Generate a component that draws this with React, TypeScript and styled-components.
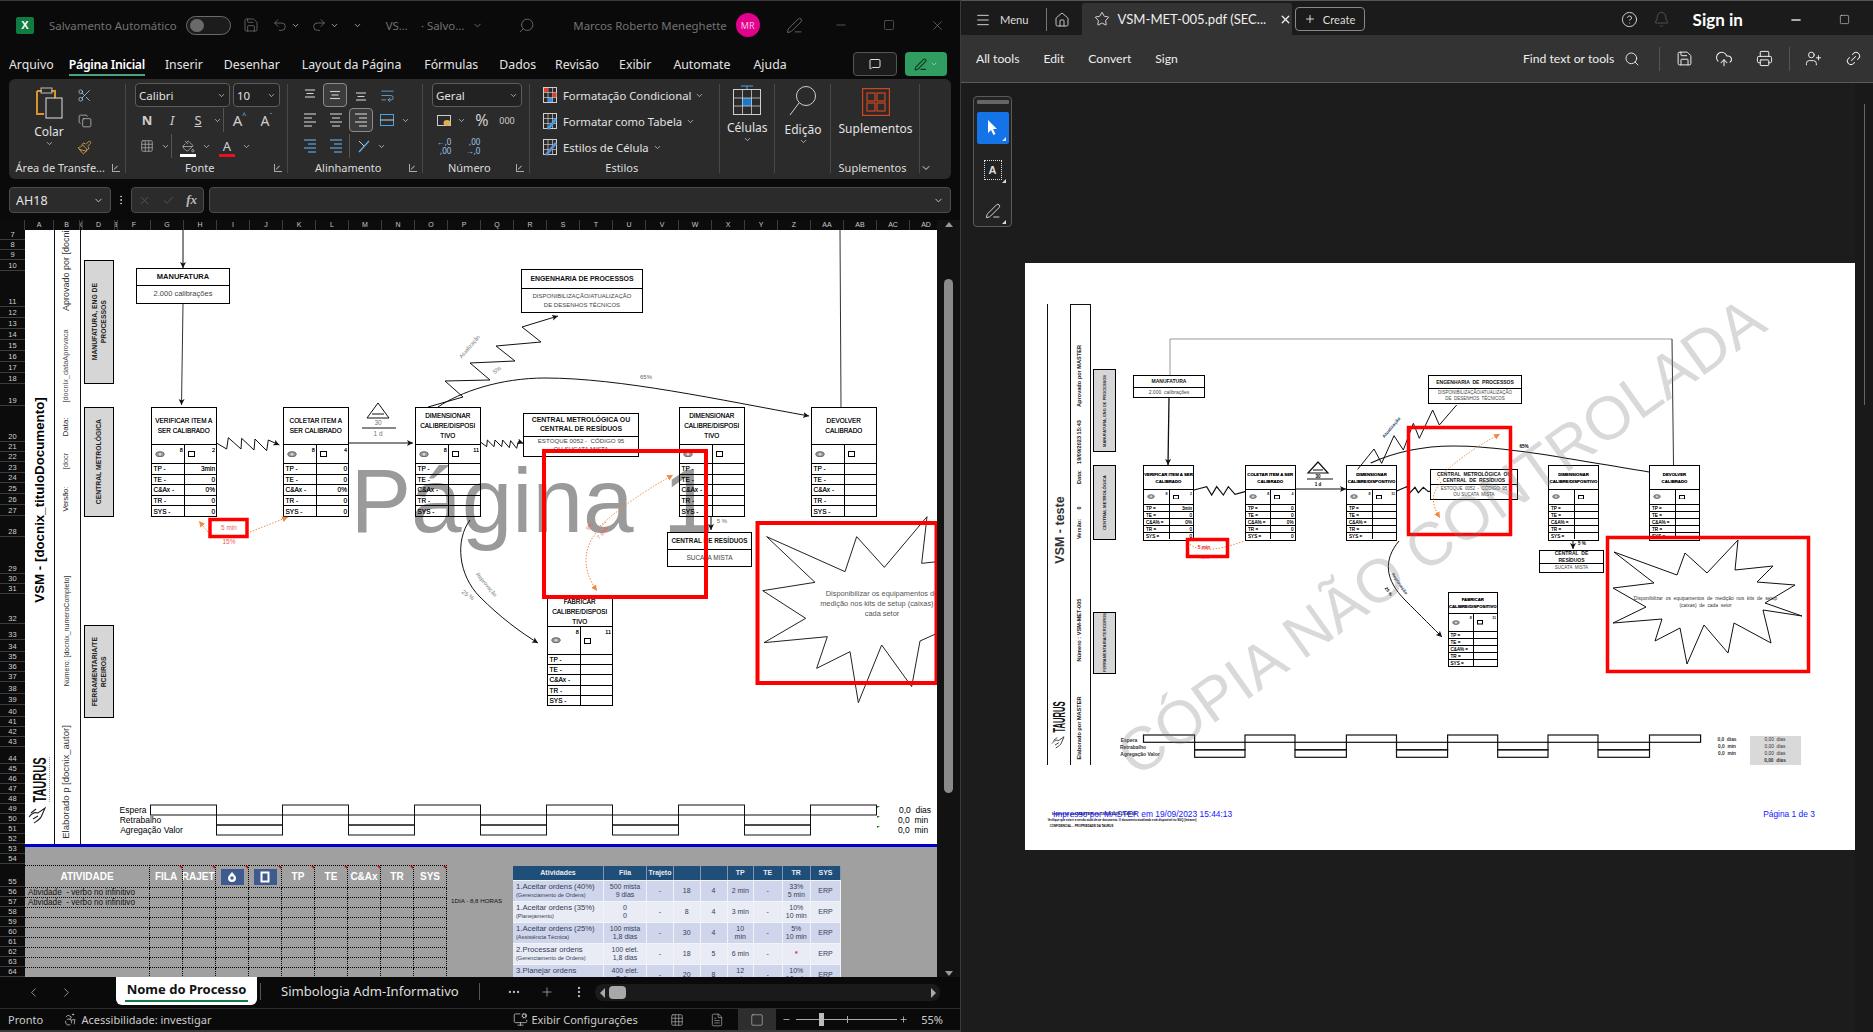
import React from 'react';
import styled, { createGlobalStyle } from 'styled-components';
import {
  ChevronDown, ChevronLeft, ChevronRight, Save, Undo2, Redo2, Search, Minus, Square, X, Plus, Scissors, Copy,
  Paintbrush, PaintBucket, Grid3x3, Check, MessageSquare, PenLine, Menu, House, Star, CircleHelp, Bell, CloudUpload,
  Printer, Link2, Ellipsis, EllipsisVertical, Accessibility, MonitorCog, FileText, UserPlus, WrapText,
} from 'lucide-react';

const UI = `"Noto Sans", "Open Sans", sans-serif`;
const SHEET = `"Liberation Sans", Arial, sans-serif`;

const Global = createGlobalStyle`
  * { box-sizing: border-box; }
  html, body { margin: 0; padding: 0; background: #111; }
  body { font-family: ${UI}; }
  svg { display: block; flex: none; }
`;

const Screen = styled.div`
  display: flex; width: 1873px; height: 1032px; overflow: hidden; background: #555;
`;

/* ------- EXCEL WINDOW ------- */
const Excel = styled.div`
  width: 961px; height: 1032px; flex: none; display: flex; flex-direction: column; background: #0a0a0a; color: #ddd;
  border-right: 1px solid #3a3a3a; border-top: 1px solid #3a3a3a;
`;
const TitleBar = styled.div`
  height: 47px; flex: none; display: flex; align-items: center; padding-left: 16px; padding-top: 1px; color: #727272;
  font-size: 11.4px; white-space: nowrap;
`;
const TB = styled.span<{ $ml?: number; $w?: number }>`
  display: flex; align-items: center; justify-content: center; flex: none;
  margin-left: ${p => p.$ml ?? 0}px; ${p => (p.$w ? `width:${p.$w}px;` : '')}
`;
const FlipIcon = styled.span`
  display: flex; transform: scaleX(-1);
`;
const XlLogo = styled.span`
  width: 18px; height: 17px; background: #107c41; border-radius: 2px; color: #fff; font: 700 11px ${SHEET};
  display: flex; align-items: center; justify-content: center; flex: none;
`;
const Toggle = styled.span`
  width: 45px; height: 19px; margin-left: 9px; border: 1px solid #6a6a6a; border-radius: 10px; padding: 2px 3px; flex: none;
  display: flex; background: #1c1c1c;
  &::before { content: ''; width: 14px; height: 13px; background: #6a6a6a; border-radius: 7px; }
`;
const Avatar = styled.span`
  width: 24px; height: 24px; margin-left: 9px; border-radius: 50%; background: #e3008c; color: #f5c6e4; flex: none;
  font-size: 9px; display: flex; align-items: center; justify-content: center;
`;
const TabsRow = styled.div`
  height: 31px; flex: none; display: flex; padding: 4px 13px 0 9px; position: relative; font-size: 12.3px; color: #e4e4e4;
`;
const RTab = styled.span<{ $ml: number; $active?: boolean }>`
  margin-left: ${p => p.$ml}px; height: 24px; line-height: 26px; white-space: nowrap; flex: none;
  font-weight: ${p => (p.$active ? 600 : 400)}; color: ${p => (p.$active ? '#fff' : '#e4e4e4')};
  letter-spacing: ${p => (p.$active ? '-0.3px' : '0')};
  border-bottom: ${p => (p.$active ? '2px solid #4ba37c' : '2px solid transparent')};
`;
const TabBtns = styled.div`
  margin-left: auto; display: flex; gap: 8px; align-self: flex-start; margin-top: 0;
`;
const CommentBtn = styled.span`
  width: 44px; height: 24px; border: 1px solid #555; border-radius: 4px; background: #1c1c1c;
  display: flex; align-items: center; justify-content: center;
`;
const ShareBtn = styled.span`
  width: 42px; height: 24px; border-radius: 4px; background: #2f9e60; color: #10331f; gap: 3px;
  display: flex; align-items: center; justify-content: center;
`;
const Ribbon = styled.div`
  height: 100px; flex: none; margin: 0 9px; background: #2b2b2b; border-radius: 6px; display: flex;
  font-size: 11.3px; color: #e2e2e2;
`;
const Group = styled.div<{ $w: number; $noSep?: boolean }>`
  width: ${p => p.$w}px; flex: none; display: flex; flex-direction: column; position: relative;
  &::after {
    content: ''; display: ${p => (p.$noSep ? 'none' : 'block')}; position: absolute; right: 0; top: 5px; bottom: 6px; width: 1px; background: #484848;
  }
`;
const Body = styled.div<{ $pl?: number }>`
  flex: 1; display: flex; padding-left: ${p => p.$pl ?? 0}px; min-height: 0;
`;
const Stack = styled.div`
  display: grid; grid-template-rows: 24px 26px 26px; padding-top: 4px; align-items: center;
`;
const Row = styled.div`
  display: flex; align-items: center; height: 100%;
`;
const Cell = styled.span<{ $w: number; $ml?: number; $sel?: boolean; $fs?: number }>`
  width: ${p => p.$w}px; height: 24px; margin-left: ${p => p.$ml ?? 0}px; flex: none; display: flex; align-items: center; justify-content: center;
  color: #cfcfcf; font-size: ${p => p.$fs ?? 13}px; position: relative;
  ${p => (p.$sel ? 'border:1px solid #8b8b8b; border-radius:4px; background:#3c3c3c;' : '')}
`;
const Sep = styled.span`
  width: 1px; height: 24px; background: #555; flex: none;
`;
const Select = styled.span<{ $w: number; $ml?: number }>`
  width: ${p => p.$w}px; height: 24px; margin-left: ${p => p.$ml ?? 0}px; flex: none; border: 1px solid #5c5c5c; border-radius: 4px;
  background: #222; padding: 0 3px; display: flex; align-items: center; justify-content: space-between; font: 11.5px ${UI}; color: #e0e0e0;
`;
const LabelRow = styled.div`
  height: 19px; flex: none; display: flex; align-items: center; padding: 0 6px 4px 0;
`;
const GLabel = styled.span`
  flex: 1; text-align: center; font-size: 11px; white-space: nowrap; color: #ddd; line-height: 14px;
`;
const Launcher = styled.span`
  width: 8px; height: 8px; border-left: 1px solid #aaa; border-bottom: 1px solid #aaa; flex: none; position: relative;
  &::after { content: ''; position: absolute; left: 1px; bottom: 1px; width: 5px; height: 1px; background: #aaa; transform: rotate(-45deg); transform-origin: left; }
`;
const PasteCol = styled.div`
  width: 55px; display: flex; flex-direction: column; align-items: center; padding-top: 8px; flex: none; font-size: 12px;
`;
const ToolsCol = styled.div`
  width: 16px; display: grid; grid-template-rows: 26px 26px 26px; padding-top: 3px; justify-items: center; align-items: center; color: #cfcfcf;
`;
const StyleRow = styled.div`
  display: flex; align-items: center; gap: 4px; height: 26px; white-space: nowrap; color: #e2e2e2;
`;
const StyleStack = styled.div`
  padding-top: 3px; padding-left: 11px;
`;
const BigCol = styled.div<{ $pt?: number }>`
  flex: 1; display: flex; flex-direction: column; align-items: center; padding-top: ${p => p.$pt ?? 6}px; font-size: 12px; color: #e2e2e2; white-space: nowrap;
`;
const BigLabel = styled.span`
  margin-top: 5px; line-height: 15px;
`;
const Tiny = styled.span<{ $c?: string }>`
  font-size: 8px; line-height: 9px; color: ${p => p.$c ?? 'inherit'}; text-align: right;
`;
const Sup = styled.span`
  font-size: 7px; line-height: 8px; align-self: flex-start; margin-top: 4px; color: #7ab8ea;
`;
const UnderBar = styled.span<{ $c: string }>`
  position: absolute; left: 5px; right: 5px; bottom: 1px; height: 3px; background: ${p => p.$c};
`;
const FormulaRow = styled.div`
  height: 26px; flex: none; margin: 8px 9px 7px; display: flex; align-items: stretch;
`;
const FBox = styled.div<{ $w?: number; $ml?: number; $grow?: boolean }>`
  ${p => (p.$w ? `width:${p.$w}px;` : '')} ${p => (p.$grow ? 'flex:1;' : 'flex:none;')}
  margin-left: ${p => p.$ml ?? 0}px; background: #2b2b2b; border: 1px solid #4c4c4c; border-radius: 4px;
  display: flex; align-items: center; justify-content: space-between; padding: 0 6px; font-size: 12.5px; color: #e6e6e6;
`;
const Fx = styled.span`
  font: italic 700 13px "Liberation Serif", serif; color: #bbb;
`;
const Dots = styled.span`
  width: 11px; margin-left: 4px; flex: none; display: flex; align-items: center; justify-content: center; color: #bbb; 
`;
const SheetWrap = styled.div`
  height: 757px; flex: none; display: flex; overflow: hidden;
`;
const SheetLeft = styled.div`
  width: 937px; flex: none; display: flex; flex-direction: column;
`;
const ColHead = styled.div`
  height: 10px; flex: none; display: flex; background: #0c0c0c; overflow: hidden;
`;
const ColH = styled.span<{ $w: number }>`
  width: ${p => p.$w}px; flex: none; border-right: 1px solid #3c3c3c; font: 400 7px/10px ${SHEET}; color: #c8c8c8; text-align: center; overflow: hidden;
`;
const SheetMid = styled.div`
  flex: 1; display: flex; min-height: 0;
`;
const RowHeads = styled.div`
  width: 25px; flex: none; background: #0c0c0c; overflow: hidden;
`;
const RowH = styled.div<{ $h: number }>`
  height: ${p => p.$h}px; border-bottom: 1px solid #3c3c3c; display: flex; align-items: flex-end; justify-content: center;
  font: 400 7.5px/9px ${SHEET}; color: #d0d0d0;
`;
const SheetMain = styled.div`
  width: 912px; flex: none; display: flex; flex-direction: column; min-height: 0;
`;
const Canvas = styled.div<{ $w: number; $h: number }>`
  position: relative; overflow: hidden; width: ${p => p.$w}px; height: ${p => p.$h}px; flex: none; background: #fff; color: #000; font-family: ${SHEET};
`;
const Overlay = styled.svg`
  position: absolute; left: 0; top: 0; width: 100%; height: 100%; pointer-events: none;
`;
const Lbl = styled.span<{ $x: number; $y: number; $r?: number; $s: number; $c?: string; $b?: boolean; $lh?: number; $ws?: number }>`
  position: absolute; left: ${p => p.$x}px; top: ${p => p.$y}px; transform: translate(-50%, -50%) rotate(${p => p.$r ?? 0}deg);
  font-size: ${p => p.$s}px; color: ${p => p.$c ?? '#000'}; font-weight: ${p => (p.$b ? 700 : 400)}; white-space: pre; text-align: center;
  line-height: ${p => (p.$lh ? `${p.$lh}px` : '1')}; word-spacing: ${p => p.$ws ?? 0}px;
`;
const Logo = styled.span<{ $x: number; $y: number; $s: number; $k: number }>`
  position: absolute; left: ${p => p.$x}px; top: ${p => p.$y}px; transform: translate(-50%, -50%) rotate(-90deg) scale(1, ${p => p.$k});
  font-size: ${p => p.$s}px; font-weight: 700; color: #111; line-height: 1; white-space: pre;
`;
const Placed = styled.div<{ $x: number; $y: number; $w: number; $h: number }>`
  position: absolute; left: ${p => p.$x}px; top: ${p => p.$y}px; width: ${p => p.$w}px; height: ${p => p.$h}px;
`;
const GreyBox = styled(Placed)<{ $fs: number }>`
  background: #d6d6d6; border: 1px solid #000; display: flex; align-items: center; justify-content: center;
  font-size: ${p => p.$fs}px; font-weight: 700; color: #222; text-align: center; white-space: nowrap;
`;
const VText = styled.span`
  writing-mode: vertical-rl; transform: rotate(180deg); line-height: 1.35; 
`;
const Node = styled(Placed)<{ $th: number }>`
  border: 1px solid #000; display: grid; grid-template-rows: ${p => p.$th}px 1fr; text-align: center;
`;
const NodeTitle = styled.div<{ $fs: number }>`
  display: flex; align-items: center; justify-content: center; font-weight: 700; font-size: ${p => p.$fs}px; line-height: 1.3; border-bottom: 1px solid #000; color: #111; white-space: pre; overflow: hidden;
`;
const NodeSub = styled.div<{ $fs: number; $top?: boolean }>`
  display: flex; align-items: ${p => (p.$top ? 'flex-start' : 'center')}; justify-content: center; font-size: ${p => p.$fs}px; line-height: 1.35; color: #444; white-space: pre; overflow: hidden;
`;
const Proc = styled(Placed)<{ $t: number; $i: number }>`
  border: 1px solid #000; display: grid; grid-template-columns: 1fr 1fr; grid-template-rows: ${p => p.$t}px ${p => p.$i}px repeat(5, 1fr);
`;
const ProcTitle = styled.div<{ $fs: number; $lh: number; $b?: boolean }>`
  grid-column: 1 / 3; display: flex; align-items: center; justify-content: center; text-align: center; font-size: ${p => p.$fs}px; line-height: ${p => p.$lh}px;
  font-weight: ${p => (p.$b ? 700 : 400)}; white-space: pre; color: #000; text-shadow: 0 0 .4px rgba(0,0,0,.7);
`;
const PCell = styled.div<{ $fs: number; $end?: boolean; $div?: boolean }>`
  border-top: 1px solid #000; ${p => (p.$div ? 'border-left: 1px solid #000;' : '')} display: flex; align-items: center; white-space: nowrap; overflow: hidden;
  justify-content: ${p => (p.$end ? 'flex-end' : 'flex-start')}; padding: 0 1px 0 2px; font-size: ${p => p.$fs}px; color: #000; text-shadow: 0 0 .4px rgba(0,0,0,.7);
`;
const IconCell = styled(PCell)`
  justify-content: space-between; padding: 0 1px 0 3px;
`;
const Num = styled.span`
  align-self: flex-start; margin-top: 2px;
`;
const BlueLine = styled.div`
  height: 3px; flex: none; background: #0000c8;
`;
const Below = styled.div`
  flex: 1; min-height: 0; overflow: hidden; background: #a0a0a0; padding-top: 18px; display: flex; align-items: flex-start;
`;
const ActTable = styled.div`
  width: 423px; flex: none; display: grid; grid-template-columns: 125px repeat(9, 33px) ; grid-template-rows: 23px repeat(9, 10px); 
`;
const AHead = styled.div<{ $mark?: boolean }>`
  border-top: 1px dotted #000; border-bottom: 1px dotted #000; border-right: 1px dotted #000; color: #fff; font: 700 10px/23px ${SHEET}; text-align: center;
  white-space: nowrap; overflow: hidden; position: relative; display: flex; align-items: center; justify-content: center;
  ${p => (p.$mark ? `&::after{content:'';position:absolute;right:0;top:0;border-top:3px solid #e00;border-left:3px solid transparent;}` : '')}
`;
const BlueIcon = styled.span`
  width: 23px; height: 16px; background: #3f5a8f; display: flex; align-items: center; justify-content: center; flex: none;
`;
const ACell = styled.div`
  border-bottom: 1px dotted #000; border-right: 1px dotted #000; font: 8.2px/9px ${SHEET}; color: #111; padding-left: 3px; white-space: pre; overflow: hidden;
`;
const Note = styled.div`
  width: 65px; flex: none; font: 6.2px/10px ${SHEET}; color: #111; padding: 31px 0 0 3px; white-space: nowrap;
`;
const DataTable = styled.div`
  width: 328px; flex: none; margin-top: 1px; display: grid; grid-template-columns: 91px 43px 27px 26.5px 27px 26.5px 28.5px 28.5px 30px; grid-auto-rows: 21px;
  grid-template-rows: 14px; font: 7px/8.5px ${SHEET}; color: #33415a;
`;
const DH = styled.div`
  background: #1f4e79; color: #e8edf5; font-weight: 700; border-right: 1px solid #7f97b5; display: flex; align-items: center; justify-content: center; text-align: center; font-size: 7px;
`;
const DC = styled.div<{ $alt?: boolean; $left?: boolean }>`
  background: ${p => (p.$alt ? '#e9ebf5' : '#cfd5ea')}; border-right: 1px solid #f2f3f9; border-top: 1px solid #f2f3f9;
  display: flex; flex-direction: column; justify-content: center; text-align: ${p => (p.$left ? 'left' : 'center')}; align-items: ${p => (p.$left ? 'flex-start' : 'center')}; padding: ${p => (p.$left ? '0 0 0 3px' : '0')};
  white-space: pre-line; font-size: ${p => (p.$left ? 7.7 : 7)}px; overflow: hidden;
`;
const Sm = styled.small`
  font-size: 5.6px; line-height: 7px; white-space: nowrap;
`;
const RedStar = styled.span`
  color: #e02020; font-weight: 700;
`;
const VScroll = styled.div`
  flex: 1; background: #121212; display: flex; flex-direction: column; align-items: center; padding-top: 2px; color: #999;
`;
const Thumb = styled.div`
  width: 9px; height: 514px; margin-top: 52px; border-radius: 5px; background: #8a8a8a;
`;
const Tri = styled.span<{ $up?: boolean }>`
  width: 0; height: 0; border-left: 4px solid transparent; border-right: 4px solid transparent; flex: none;
  ${p => (p.$up ? 'border-bottom: 5px solid #999;' : 'border-top: 5px solid #999; margin-top: auto; margin-bottom: 1px;')}
`;
const SheetTabs = styled.div`
  height: 31px; flex: none; display: flex; align-items: flex-start; color: #ddd; font-size: 13px; padding-left: 26px;
`;
const TabIcon = styled.span<{ $ml: number; $t?: number }>`
  margin-left: ${p => p.$ml}px; margin-top: ${p => p.$t ?? 8}px; display: flex; flex: none; color: #bbb;
`;
const ActiveTab = styled.span`
  margin-left: 42px; width: 141px; height: 28px; background: #fff; color: #111; border-radius: 0 0 6px 6px; font-weight: 700; text-align: center; flex: none;
  line-height: 24px; font-size: 13px; position: relative; white-space: nowrap;
  &::after { content: ''; position: absolute; left: 9px; right: 9px; bottom: 3px; height: 2px; background: #107c41; }
`;
const TabSep = styled.span<{ $ml: number }>`
  width: 1px; height: 17px; margin: 6px 0 0 ${p => p.$ml}px; background: #555; flex: none;
`;
const SheetTab = styled.span`
  margin-left: 20px; flex: none; line-height: 28px; white-space: nowrap; font-size: 13.1px;
`;
const HTrack = styled.div`
  margin: 7px 0 0 9px; width: 345px; height: 17px; border-radius: 8px; background: #1a1a1a; flex: none; display: flex; align-items: center; padding: 0 4px 0 5px;
`;
const HThumb = styled.span`
  width: 17px; height: 13px; border-radius: 4px; background: #a8a8a8; margin-left: 4px;
`;
const HTriL = styled.span`
  border-right: 5px solid #aaa; border-top: 5px solid transparent; border-bottom: 5px solid transparent;
`;
const HTriR = styled.span`
  border-left: 5px solid #aaa; border-top: 5px solid transparent; border-bottom: 5px solid transparent; margin-left: auto;
`;
const Status = styled.div`
  height: 24px; flex: none; border-top: 1px solid #2c2c2c; display: flex; align-items: center; padding-left: 8px; font-size: 11px; color: #ccc; white-space: nowrap; border-bottom: 2px solid #3a3a3a;
`;
const SItem = styled.span<{ $ml: number; $on?: boolean }>`
  margin-left: ${p => p.$ml}px; flex: none; display: flex; align-items: center; height: 100%; color: #ccc;
  ${p => (p.$on ? 'background:#2e2e2e; padding: 0 12px;' : '')}
`;
const ZoomTrack = styled.span`
  width: 101px; height: 1px; background: #aaa; margin-left: 4.5px; flex: none; position: relative; display: flex; align-items: center;
  &::before { content: ''; position: absolute; left: 23px; top: -6px; width: 5px; height: 13px; background: #bbb; }
  &::after { content: ''; position: absolute; left: 51px; top: -3px; width: 1px; height: 7px; background: #aaa; }
`;

/* ------- ACROBAT ------- */
const Acro = styled.div`
  flex: 1; height: 1032px; display: flex; flex-direction: column; background: #1c1c1c; color: #e6e6e6; font-family: "Lato", "Noto Sans", sans-serif; border-top: 1px solid #555;
`;
const ATop = styled.div`
  height: 34px; flex: none; display: flex; align-items: flex-end; background: #1b1b1b; font-size: 11.2px; white-space: nowrap;
`;
const AI = styled.span<{ $ml?: number; $w?: number }>`
  margin-left: ${p => p.$ml ?? 0}px; ${p => (p.$w ? `width:${p.$w}px;` : '')} flex: none; display: flex; align-items: center; justify-content: center; height: 31px; color: #ddd;
`;
const ASep = styled.span`
  width: 1px; height: 23px; background: #777; margin: 0 0 4px 17px; flex: none;
`;
const DocTab = styled.div`
  margin-left: 12.5px; width: 209.5px; height: 32px; background: #333; display: flex; align-items: center; border-radius: 3px 3px 0 0; padding-left: 11.5px; font-size: 13.1px; flex: none; color: #eee;
`;
const CreateBtn = styled.span`
  margin: 0 0 4px 3px; width: 70px; height: 24px; border: 1px solid #888; border-radius: 4px; display: flex; align-items: center; justify-content: center; gap: 7px; font-size: 11.2px; flex: none; color: #ddd;
`;
const SignIn = styled.span`
  font-size: 17px; font-weight: 700; color: #fff;
`;
const ATool = styled.div`
  height: 48px; flex: none; background: #333; border-bottom: 1px solid #5a5a5a; display: flex; align-items: center; font-size: 12.2px; padding-left: 15px; white-space: nowrap; color: #eee;
`;
const ATxt = styled.span<{ $ml?: number }>`
  margin-left: ${p => p.$ml ?? 0}px; flex: none; display: flex; align-items: center; color: #eee;
`;
const RotIcon = styled.span`
  display: flex; transform: rotate(-45deg);
`;
const AVSep = styled.span<{ $ml: number }>`
  width: 1px; height: 24px; background: #555; margin-left: ${p => p.$ml}px; flex: none;
`;
const AMain = styled.div`
  flex: 1; display: flex; min-height: 0;
`;
const Rail = styled.div`
  width: 64px; flex: none; padding: 13px 0 0 12px;
`;
const RailBox = styled.div`
  width: 39px; height: 131px; border: 1px solid #5a5a5a; border-radius: 4px; padding: 3px; background: #232323; display: flex; flex-direction: column; align-items: center;
`;
const RailHandle = styled.div`
  width: 32px; height: 4px; background: #666; border-radius: 1px; flex: none;
`;
const RailBtn = styled.div<{ $on?: boolean; $mt: number }>`
  width: 32px; height: 32px; margin-top: ${p => p.$mt}px; border-radius: 2px; background: ${p => (p.$on ? '#1473e6' : 'transparent')}; display: flex; align-items: center; justify-content: center; position: relative; flex: none;
  &::after { content: ''; position: absolute; right: 3px; bottom: 3px; border-bottom: 4px solid #ddd; border-left: 4px solid transparent; }
`;
const TextTool = styled.span`
  width: 18px; height: 20px; border: 1px dotted #ddd; font: 700 11px/18px ${SHEET}; color: #ddd; text-align: center;
`;
const DocArea = styled.div`
  width: 830px; flex: none; padding-top: 180px;
`;
const ScrollCol = styled.div`
  flex: 1; background: #191919; display: flex; justify-content: center; padding-top: 21px;
`;
const ScrollLine = styled.div`
  width: 1px; height: 301px; background: #666;
`;

/* ------- DATA ------- */
const COLS: [string, number][] = [['', 25], ['A', 29], ['B', 26], ['C', 3], ['D', 32], ['E', 3],
  ...['F', 'G', 'H', 'I', 'J', 'K', 'L', 'M', 'N', 'O', 'P', 'Q', 'R', 'S', 'T', 'U', 'V', 'W', 'X', 'Y', 'Z', 'AA', 'AB', 'AC', 'AD'].map(c => [c, 33] as [string, number])];
const ROWS: [number, number][] = [[7, 10], [8, 10], [9, 10], [10, 11], [11, 36], [12, 11], [13, 11], [14, 11], [15, 11], [16, 11], [17, 11], [18, 11], [19, 22], [20, 36], [21, 10], [22, 10], [23, 11], [24, 10], [25, 11], [26, 11], [27, 11], [28, 21], [29, 37], [30, 10], [31, 10], [32, 30], [33, 16], [34, 12], [35, 10], [36, 10], [37, 10], [38, 12], [39, 11], [40, 12], [41, 10], [42, 10], [43, 10], [44, 17], [45, 10], [46, 10], [47, 10], [48, 10], [49, 10], [50, 10], [51, 10], [52, 10], [53, 10], [54, 10], [55, 23], [56, 10], [57, 10], [58, 10], [59, 10], [60, 10], [61, 10], [62, 10], [63, 10], [64, 10]];

const BAD = [
  [['1.Aceitar ordens (40%)', '(Gerenciamento de Ordens)'], '500 mista\n9 dias', '-', '18', '4', '2 min', '-', '33%\n5 min', 'ERP'],
  [['1.Aceitar ordens (35%)', '(Planejamento)'], '0\n0', '-', '8', '4', '3 min', '-', '10%\n10 min', 'ERP'],
  [['1.Aceitar ordens (25%)', '(Assistência Técnica)'], '100 mista\n1,8 dias', '-', '30', '4', '10\nmin', '-', '5%\n10 min', 'ERP'],
  [['2.Processar ordens', '(Gerenciamento de Ordens)'], '100 elet.\n1,8 dias', '-', '18', '5', '6 min', '-', '*', 'ERP'],
  [['3.Planejar ordens', '(Planejamento)'], '400 elet.\n7 dias', '-', '20', '8', '12\nmin', '-', '10%\n10 min', 'ERP'],
] as any[];

const ico = '#cfcfcf';
const Lines = ({ rows, c = ico }: { rows: [number, number, number][]; c?: string }) => (
  <svg width="16" height="16" viewBox="0 0 16 16">
    {rows.map(([a, b, y], i) => <line key={i} x1={a} x2={b} y1={y} y2={y} stroke={c} strokeWidth="1.1" />)}
  </svg>
);
const aV = (y: number): [number, number, number][] => [[3, 13, y], [4.5, 11.5, y + 3.5], [3, 13, y + 7]];
const aH = (m: 'l' | 'c' | 'r'): [number, number, number][] => {
  const f = (w: number) => (m === 'l' ? [2, 2 + w] : m === 'r' ? [14 - w, 14] : [8 - w / 2, 8 + w / 2]);
  return [2, 6, 10, 14].map((y, i) => [...f(i % 2 ? 8 : 12), y] as [number, number, number]);
};
const Chev = ({ s = 9 }: { s?: number }) => <ChevronDown size={s} color="#ccc" strokeWidth={2} />;

const PasteIcon = () => (
  <svg width="30" height="32" viewBox="0 0 30 32">
    <path d="M3 4h5M17 4h4v8M3 4v23h7" fill="none" stroke="#d9952a" strokeWidth="2" />
    <rect x="7" y="1" width="11" height="5" fill="none" stroke="#bbb" />
    <rect x="12" y="11" width="16" height="20" fill="#2b2b2b" stroke="#e2e2e2" />
  </svg>
);
const StyleIcon = ({ k }: { k: 0 | 1 | 2 }) => (
  <svg width="18" height="18" viewBox="0 0 18 18">
    <rect x="2.5" y="1.5" width="13" height="15" fill="none" stroke="#cfcfcf" />
    <path d="M2.5 6.5h13M2.5 11.5h13M7 1.5v15M11.5 1.5v15" stroke="#cfcfcf" strokeWidth=".7" />
    {k === 0 && <><rect x="3" y="2" width="4" height="4" fill="#e83b2c" /><rect x="11.5" y="7" width="4" height="4" fill="#e83b2c" /><rect x="7" y="12" width="4" height="4" fill="#3b8ee8" /></>}
    {k === 1 && <path d="M6 16l8-10 2 2-8 10z" fill="#3aa0e8" />}
    {k === 2 && <path d="M4 16l10-12 2 2-10 12z" fill="#5b8fd6" />}
  </svg>
);
const CellsIcon = () => (
  <svg width="28" height="30" viewBox="0 0 28 30">
    <path d="M8 1h12M14 1v3" stroke="#4aa3e0" />
    <rect x=".5" y="4.5" width="27" height="25" fill="none" stroke="#cfcfcf" />
    <rect x="9" y="13" width="10" height="8" fill="#1c78c8" />
    <path d="M.5 13h27M.5 21h27M9.5 4.5v25M18.5 4.5v25" stroke="#cfcfcf" strokeWidth=".8" />
  </svg>
);
const BigSearch = () => (
  <svg width="30" height="32" viewBox="0 0 30 32"><circle cx="18" cy="11" r="9.5" fill="none" stroke="#cfcfcf" /><path d="M11 18L2 30" stroke="#cfcfcf" /></svg>
);
const Addins = () => (
  <svg width="28" height="28" viewBox="0 0 28 28" fill="none" stroke="#d2451e" strokeWidth="1.2">
    <rect x=".6" y=".6" width="26.8" height="26.8" />
    <rect x="5" y="5" width="8" height="8" /><rect x="15" y="5" width="8" height="8" /><rect x="5" y="15" width="8" height="8" /><rect x="15" y="15" width="8" height="8" />
  </svg>
);
const EyeI = ({ w = 10 }: { w?: number }) => (
  <svg width={w} height={w * 0.65} viewBox="0 0 10 6.5"><ellipse cx="5" cy="3.2" rx="4.2" ry="2.4" fill="#999" stroke="#666" strokeWidth="1" /><circle cx="5" cy="3.2" r="1.2" fill="#ddd" /></svg>
);
const SqI = ({ w = 7, h = 5 }: { w?: number; h?: number }) => (
  <svg width={w + 1} height={h + 1}><rect x=".5" y=".5" width={w} height={h} fill="none" stroke="#000" /></svg>
);
const Bird = ({ x, y, s = 1 }: { x: number; y: number; s?: number }) => (
  <g transform={`translate(${x} ${y}) scale(${s})`} fill="none" stroke="#222" strokeWidth="1.1">
    <path d="M0 10C3 6 6 5 9 6L16 1 13 8C12 12 8 14 5 16" /><path d="M4 12L9 9M2 6L7 2" />
  </g>
);

type PCfg = { t: number; i: number; fs: number; lh: number; ifs: number; b: boolean; eye: number; sq: [number, number]; sep: string };
const EX: PCfg = { t: 36, i: 19, fs: 6.4, lh: 10, ifs: 6.5, b: false, eye: 10, sq: [6, 5], sep: '-' };
const PD: PCfg = { t: 23, i: 15, fs: 4.3, lh: 7, ifs: 4.6, b: true, eye: 8, sq: [5, 3.5], sep: '=' };

type Box = { x: number; y: number; w: number; h: number };
const ProcBox = ({ b, c, title, n1, n2, vals, keys }: { b: Box; c: PCfg; title: string; n1?: string; n2?: string; vals?: string[]; keys: string[] }) => (
  <Proc $x={b.x} $y={b.y} $w={b.w} $h={b.h} $t={c.t} $i={c.i}>
    <ProcTitle $fs={c.fs} $lh={c.lh} $b={c.b}>{title}</ProcTitle>
    <IconCell $fs={c.ifs - 1}><EyeI w={c.eye} /><Num>{n1}</Num></IconCell>
    <IconCell $fs={c.ifs - 1} $div><SqI w={c.sq[0]} h={c.sq[1]} /><Num>{n2}</Num></IconCell>
    {keys.map((k, i) => (
      <React.Fragment key={k}>
        <PCell $fs={c.ifs} >{k} {c.sep}</PCell>
        <PCell $fs={c.ifs} $end $div>{vals ? vals[i] : ''}</PCell>
      </React.Fragment>
    ))}
  </Proc>
);
const KX = ['TP', 'TE', 'C&Ax', 'TR', 'SYS'];
const KP = ['TP', 'TE', 'C&A%', 'TR', 'SYS'];

const rx = (x1: number, y1: number, x2: number, y2: number): Box => ({ x: x1 - 25, y: y1 - 230, w: x2 - x1, h: y2 - y1 });
const px = (x1: number, y1: number, x2: number, y2: number): Box => ({ x: x1 - 1025, y: y1 - 263, w: x2 - x1, h: y2 - y1 });
const lx = (x: number, y: number) => ({ $x: x - 25, $y: y - 230 });
const lp = (x: number, y: number) => ({ $x: x - 1025, $y: y - 263 });
const bp = (b: Box) => ({ $x: b.x, $y: b.y, $w: b.w, $h: b.h });

const zz = (pts: number[][], ox: number, oy: number) => 'M' + pts.map(([a, b]) => `${ox + a / 3} ${oy + b / 3}`).join('L');

const Markers = ({ id }: { id: string }) => (
  <defs>
    <marker id={`${id}k`} markerWidth="7" markerHeight="7" refX="6" refY="3" orient="auto" markerUnits="userSpaceOnUse"><path d="M0 0L6 3L0 6L1.5 3z" fill="#111" /></marker>
    <marker id={`${id}o`} markerWidth="7" markerHeight="7" refX="6" refY="3" orient="auto" markerUnits="userSpaceOnUse"><path d="M0 0L6 3L0 6z" fill="#f08a40" /></marker>
  </defs>
);

const ExcelDiagram = () => {
  const e = [150.5, 216.5, 282.5, 348.5, 414.5, 480.5, 546.5, 612.5, 678.5, 744.5, 810.5, 876.5];
  return (
    <Canvas $w={912} $h={614}>
      <Lbl {...lx(532, 500)} $s={91} $c="#9a9a9a" $ws={4}>Página 1</Lbl>
      <Lbl {...lx(40, 500)} $r={-90} $s={13.3} $b>VSM - [docnix_tituloDocumento]</Lbl>
      <Lbl {...lx(66, 266)} $r={-90} $s={9} $c="#333">Aprovado por [docnix_</Lbl>
      <Lbl {...lx(66, 366)} $r={-90} $s={7.4} $c="#555">[docnix_dataAprovaca</Lbl>
      <Lbl {...lx(66, 427)} $r={-90} $s={8} $c="#222">Data:</Lbl>
      <Lbl {...lx(66, 461)} $r={-90} $s={7.5} $c="#555">[docr</Lbl>
      <Lbl {...lx(66, 499)} $r={-90} $s={7.4} $c="#222">Versão:</Lbl>
      <Lbl {...lx(66, 631)} $r={-90} $s={7} $c="#333">Número: [docnix_numeroCompleto]</Lbl>
      <Lbl {...lx(66, 782)} $r={-90} $s={9.5} $c="#333">Elaborado p [docnix_autor]</Lbl>
      <Logo {...lx(40, 780)} $s={11} $k={1.6}>TAURUS</Logo>

      <GreyBox {...bp(rx(84, 260, 114, 384))} $fs={6.8}><VText>MANUFATURA, ENG DE<br />PROCESSOS</VText></GreyBox>
      <GreyBox {...bp(rx(84, 407, 114, 517))} $fs={6.8}><VText>CENTRAL METROLÓGICA</VText></GreyBox>
      <GreyBox {...bp(rx(84, 625, 114, 718))} $fs={6.8}><VText>FERRAMENTARIA/TE<br />RCEIROS</VText></GreyBox>

      <Node {...bp(rx(136, 268, 230, 304))} $th={17}><NodeTitle $fs={7.5}>MANUFATURA</NodeTitle><NodeSub $fs={7.5}>2.000 calibrações</NodeSub></Node>
      <Node {...bp(rx(521, 269, 643, 313))} $th={19}><NodeTitle $fs={6.9}>ENGENHARIA DE PROCESSOS</NodeTitle><NodeSub $fs={6}>{'DISPONIBILIZAÇÃO/ATUALIZAÇÃO\nDE DESENHOS TÉCNICOS'}</NodeSub></Node>
      <Node {...bp(rx(523, 413, 639, 457))} $th={23}><NodeTitle $fs={6.9}>{'CENTRAL METROLÓGICA OU\nCENTRAL DE RESÍDUOS'}</NodeTitle><NodeSub $fs={6.2} $top>{'ESTOQUE 0052 -  CÓDIGO 95\nOU SUCATA MISTA'}</NodeSub></Node>
      <Node {...bp(rx(667, 532, 752, 567))} $th={17}><NodeTitle $fs={6.4}>CENTRAL DE RESÍDUOS</NodeTitle><NodeSub $fs={6.5}>SUCATA MISTA</NodeSub></Node>

      <ProcBox b={rx(150.5, 407, 217, 517)} c={EX} keys={KX} title={'VERIFICAR ITEM A\nSER CALIBRADO'} n1="8" n2="2" vals={['3min', '0', '0%', '0', '0']} />
      <ProcBox b={rx(282.5, 407, 349, 517)} c={EX} keys={KX} title={'COLETAR ITEM A\nSER CALIBRADO'} n1="8" n2="4" vals={['0', '0', '0%', '0', '0']} />
      <ProcBox b={rx(414.5, 407, 481, 517)} c={EX} keys={KX} title={'DIMENSIONAR\nCALIBRE/DISPOSI\nTIVO'} n1="8" n2="11" />
      <ProcBox b={rx(678.5, 407, 745, 517)} c={EX} keys={KX} title={'DIMENSIONAR\nCALIBRE/DISPOSI\nTIVO'} />
      <ProcBox b={rx(810.5, 407, 877, 517)} c={EX} keys={KX} title={'DEVOLVER\nCALIBRADO'} />
      <ProcBox b={rx(546.5, 597, 613, 706)} c={{ ...EX, t: 28, i: 28 }} keys={KX} title={'FABRICAR\nCALIBRE/DISPOSI\nTIVO'} n1="8" n2="11" />

      <Lbl {...lx(378, 423)} $s={6.5} $c="#777">30</Lbl>
      <Lbl {...lx(378, 434)} $s={6.5} $c="#777">1 d</Lbl>
      <Lbl {...lx(470, 347)} $r={-50} $s={5.5} $c="#777">Atualização</Lbl>
      <Lbl {...lx(497, 370)} $r={-40} $s={6} $c="#777">5%</Lbl>
      <Lbl {...lx(646, 377)} $s={6} $c="#666">65%</Lbl>
      <Lbl {...lx(722, 521)} $s={6} $c="#666">5 %</Lbl>
      <Lbl {...lx(486, 585)} $r={50} $s={5.5} $c="#777">Reprovação</Lbl>
      <Lbl {...lx(468, 595)} $r={35} $s={6} $c="#777">25 %</Lbl>
      <Lbl {...lx(229, 528)} $s={6.5} $c="#f05a5a">5 min</Lbl>
      <Lbl {...lx(229, 542)} $s={6.5} $c="#f05a5a">15%</Lbl>
      <Lbl {...lx(590, 527)} $r={-50} $s={5.5} $c="#f05a5a">5%</Lbl>
      <Lbl {...lx(603, 533)} $r={-50} $s={5.5} $c="#f05a5a">7 dias</Lbl>
      <Lbl {...lx(882, 604)} $s={7.4} $c="#555" $lh={9.8}>{'Disponibilizar os equipamentos de\nmedição nos kits de setup (caixas) de\ncada setor'}</Lbl>

      <Lbl {...lx(133, 810)} $s={8.5}>Espera</Lbl>
      <Lbl {...lx(140.5, 820)} $s={8.5}>Retrabalho</Lbl>
      <Lbl {...lx(151.5, 830)} $s={8.5}>Agregação Valor</Lbl>
      <Lbl {...lx(915, 810)} $s={8.5}>0,0  dias</Lbl>
      <Lbl {...lx(913, 820)} $s={8.5}>0,0  min</Lbl>
      <Lbl {...lx(913, 830)} $s={8.5}>0,0  min</Lbl>

      <Overlay viewBox="25 230 912 614">
        <Markers id="x" />
        <g fill="none" stroke="#111" strokeWidth="1">
          <path d="M54.5 230V844M80.5 230V844" />
          <path d="M183 230V268" markerEnd="url(#xk)" />
          <path d="M183 304L181.5 405" stroke="#333" markerEnd="url(#xk)" />
          <path d={zz([[651, 655], [680, 672], [685, 638], [723, 672], [725, 640], [762, 675], [765, 642], [800, 677], [805, 645], [838, 660]], 0, 225)} markerEnd="url(#xk)" />
          <path d="M349 443H413" markerEnd="url(#xk)" />
          <path d={zz([[0, 650], [20, 665], [22, 645], [42, 665], [45, 645], [65, 665], [68, 645], [88, 668], [92, 647], [110, 670], [115, 650], [130, 655]], 480, 225)} markerEnd="url(#xk)" />
          <path d="M428 407L463 397L445 381L490 380L470 363L515 361L496 346L541 342L522 327L558 316" markerEnd="url(#xk)" />
          <path d="M438 407C460 392 500 378 545 378C620 378 720 400 809 416" markerEnd="url(#xk)" />
          <path d="M840 230L841 407" stroke="#333" />
          <path d="M711 517V530" markerEnd="url(#xk)" />
          <path d="M470 520C455 540 458 575 480 597C500 617 520 632 538 643" markerEnd="url(#xk)" />
          <path d="M367 418L378 403L389 418ZM372 414H384" />
          <path d="M362 428H396" />
          <path d={zz([[860, 50], [1095, 155], [1130, 50], [1213, 142], [1320, 15], [1341, -10], [1325, 130], [1420, 120], [1460, 300], [1320, 363], [1295, 500], [1205, 375], [1135, 548], [1110, 395], [1010, 445], [1042, 350], [852, 368], [977, 295], [848, 212], [1005, 187], [860, 50]], 480, 520)} stroke="#222" />
          {e.slice(0, 11).map((v, i) => (i % 2 === 0
            ? <rect key={i} x={v} y={805} width={e[i + 1] - v} height={10} />
            : <React.Fragment key={i}><rect x={v} y={815} width={e[i + 1] - v} height={10} /><rect x={v} y={825} width={e[i + 1] - v} height={10} /></React.Fragment>))}
          <path d="M49.5 757V803" stroke="#999" strokeDasharray="1 1" />
        </g>
        <g fill="#0a7a0a">
          <path d="M877 806h3l-3 2zM877 816h3l-3 2zM877 826h3l-3 2z" />
        </g>
        <g fill="none" stroke="#f08a40" strokeDasharray="1.5 1.5">
          <path d="M250 532L288 517" markerEnd="url(#xo)" />
          <path d="M208 532L199 521" markerEnd="url(#xo)" />
          <path d="M600 526Q628 500 673 475" markerEnd="url(#xo)" />
          <path d="M606 522C580 545 582 570 597 591" markerEnd="url(#xo)" />
        </g>
        <g fill="none" stroke="#f00" strokeWidth="4">
          <rect x="210" y="519.5" width="37" height="17" strokeWidth="3.5" />
          <rect x="544" y="451" width="162" height="146" />
          <rect x="757.5" y="523" width="179" height="160" />
        </g>
        <Bird x={29} y={807} />
      </Overlay>
    </Canvas>
  );
};

const PdfDiagram = () => {
  const e = [1143.5, 1194.6, 1245, 1295, 1346.4, 1396.5, 1447.6, 1497.7, 1548, 1598, 1649.5, 1700.6];
  const b = '#222';
  return (
    <Canvas $w={830} $h={587}>
      <Lbl {...lp(1060, 530)} $r={-90} $s={12.5} $b $c="#333">VSM - teste</Lbl>
      <Lbl {...lp(1080, 376)} $r={-90} $s={5.6} $b $c={b}>Aprovado por MASTER</Lbl>
      <Lbl {...lp(1080, 442)} $r={-90} $s={5.6} $b $c={b}>19/09/2023 15:43</Lbl>
      <Lbl {...lp(1080, 477)} $r={-90} $s={5.6} $b $c={b}>Data:</Lbl>
      <Lbl {...lp(1080, 508)} $r={-90} $s={5.6} $b $c={b}>0</Lbl>
      <Lbl {...lp(1080, 529)} $r={-90} $s={5.6} $b $c={b}>Versão:</Lbl>
      <Lbl {...lp(1080, 630)} $r={-90} $s={5.6} $b $c={b}>Número : VSM-MET-005</Lbl>
      <Lbl {...lp(1080, 728)} $r={-90} $s={5.6} $b $c={b}>Elaborado por MASTER</Lbl>
      <Logo {...lp(1060, 717)} $s={7.6} $k={2.2}>TAURUS</Logo>

      <GreyBox {...bp(px(1093, 369, 1116, 452))} $fs={4}><VText>MANUFATURA, ENG DE PROCESSOS</VText></GreyBox>
      <GreyBox {...bp(px(1093, 465, 1116, 540))} $fs={4.4}><VText>CENTRAL METROLÓGICA</VText></GreyBox>
      <GreyBox {...bp(px(1093, 612, 1116, 674))} $fs={4}><VText>FERRAMENTARIA/TERCEIROS</VText></GreyBox>

      <Node {...bp(px(1133, 375, 1205, 398))} $th={11.5}><NodeTitle $fs={5}>MANUFATURA</NodeTitle><NodeSub $fs={5} >2.000  calibrações</NodeSub></Node>
      <Node {...bp(px(1428, 375, 1522, 404))} $th={12.5}><NodeTitle $fs={5}>ENGENHARIA  DE  PROCESSOS</NodeTitle><NodeSub $fs={4.5}>{'DISPONIBILIZAÇÃO/ATUALIZAÇÃO\nDE  DESENHOS  TÉCNICOS'}</NodeSub></Node>
      <Node {...bp(px(1430, 469, 1518, 500))} $th={15}><NodeTitle $fs={5}>{'CENTRAL  METROLÓGICA  OU\nCENTRAL  DE  RESÍDUOS'}</NodeTitle><NodeSub $fs={4.5}>{'ESTOQUE  0052  -  CÓDIGO  95\nOU SUCATA  MISTA'}</NodeSub></Node>
      <Node {...bp(px(1539, 550, 1604, 573))} $th={12.5}><NodeTitle $fs={5}>{'CENTRAL  DE\nRESÍDUOS'}</NodeTitle><NodeSub $fs={4.5}>SUCATA  MISTA</NodeSub></Node>

      <ProcBox b={px(1143, 465, 1194, 540.5)} c={PD} keys={KP} title={'VERIFICAR ITEM A SER\nCALIBRADO'} n1="8" n2="2" vals={['3min', '0', '0%', '0', '0']} />
      <ProcBox b={px(1245, 465, 1295.5, 540.5)} c={PD} keys={KP} title={'COLETAR ITEM A SER\nCALIBRADO'} n1="8" n2="4" vals={['0', '0', '0%', '0', '0']} />
      <ProcBox b={px(1346, 465, 1397, 540.5)} c={PD} keys={KP} title={'DIMENSIONAR\nCALIBRE/DISPOSITIVO'} n1="8" n2="11" />
      <ProcBox b={px(1548, 465, 1599, 540.5)} c={PD} keys={KP} title={'DIMENSIONAR\nCALIBRE/DISPOSITIVO'} />
      <ProcBox b={px(1649, 465, 1700, 540.5)} c={PD} keys={KP} title={'DEVOLVER\nCALIBRADO'} />
      <ProcBox b={px(1447.5, 592, 1498, 667)} c={{ ...PD, t: 20, i: 18 }} keys={KP} title={'FABRICAR\nCALIBRE/DISPOSITIVO'} n1="8" n2="11" />

      <Lbl {...lp(1318, 477)} $s={4.6} $b>30</Lbl>
      <Lbl {...lp(1318, 485)} $s={4.6} $b>1 d</Lbl>
      <Lbl {...lp(1392, 428)} $r={-50} $s={4.6} $b $c="#2a4a6a">Atualização</Lbl>
      <Lbl {...lp(1524, 447)} $s={4.6} $b>65%</Lbl>
      <Lbl {...lp(1582, 544)} $s={4.6} $b>5 %</Lbl>
      <Lbl {...lp(1399, 584)} $r={55} $s={4.4} $b $c="#2a4a6a">Reprovação</Lbl>
      <Lbl {...lp(1388, 592)} $r={55} $s={4.4} $b>25 %</Lbl>
      <Lbl {...lp(1204, 548)} $s={4.8} $c="#e81010" $b>5 min</Lbl>
      <Lbl {...lp(1205, 558)} $s={4} $c="#e81010">15%</Lbl>
      <Lbl {...lp(1705.5, 601.5)} $s={4.9} $c="#333" $lh={7}>{'Disponibilizar  os  equipamentos  de  medição  nos  kits  de  setup\n(caixas)  de  cada  setor'}</Lbl>

      <Lbl {...lp(1129, 740)} $s={5} $b $c="#333">Espera</Lbl>
      <Lbl {...lp(1133, 747)} $s={5} $b $c="#333">Retrabalho</Lbl>
      <Lbl {...lp(1140, 754)} $s={5} $b $c="#333">Agregação Valor</Lbl>
      {['0,0  dias', '0,0  min', '0,0  min'].map((t, i) => <Lbl key={i} {...lp(1727, 740 + i * 7)} $s={4.8} $b $c="#333">{t}</Lbl>)}
      <Overlay viewBox="1025 263 830 587">
        <rect x="1750" y="736" width="51" height="29" fill="#d9d9d9" />
      </Overlay>
      {['0,00  dias', '0,00  dias', '0,00  dias', '0,00  dias'].map((t, i) => <Lbl key={i} {...lp(1775, 740 + i * 7)} $s={4.8} $b={i === 3} $c="#333">{t}</Lbl>)}

      <Lbl {...lp(1094, 814.5)} $s={3.8} $b>Impresso por MASTER em 19/09/2023 15:43:50</Lbl>
      <Lbl {...lp(1142.5, 814)} $s={8.4} $c="#1414ff">Impresso por MASTER em 19/09/2023 15:44:13</Lbl>
      <Lbl {...lp(1789, 814)} $s={8.4} $c="#1414ff">Página 1 de 3</Lbl>
      <Lbl {...lp(1122, 820)} $s={2.8} $b>Verifique que esta é a versão atual deste documento. O documento atualizado está disponível no SGQ (Intranet)</Lbl>
      <Lbl {...lp(1081.5, 826)} $s={2.9} $b>CONFIDENCIAL – PROPRIEDADE DA TAURUS</Lbl>

      <Overlay viewBox="1025 263 830 587">
        <Markers id="p" />
        <g fill="none" stroke="#111" strokeWidth="1">
          <path d="M1047.5 304V765M1070.5 304V765M1090.5 304V765M1070 304.5H1091" />
          <path d="M1170 375V339H1672" stroke="#999" />
          <path d="M1672 339L1673.5 465" stroke="#333" />
          <path d="M1169 398L1168 465" markerEnd="url(#pk)" strokeWidth="1.3" />
          <path d={zz([[522, 690], [560, 680], [575, 705], [590, 680], [610, 705], [625, 680], [645, 703], [675, 695]], 1020, 260)} strokeWidth="1.2" />
          <path d="M1295.5 489H1346" markerEnd="url(#pk)" />
          <path d={zz([[1130, 693], [1160, 680], [1170, 698], [1185, 682], [1195, 698], [1210, 682], [1225, 695], [1233, 693]], 1020, 260)} strokeWidth="1.2" />
          <path d={zz([[1013, 628], [1062, 567], [1085, 610], [1122, 527], [1150, 570], [1180, 490], [1198, 535], [1238, 450], [1258, 495], [1310, 435]], 1020, 260)} />
          <path d="M1370.7 463C1395 452 1425 446 1453 446C1510 446 1590 463 1649 472" strokeWidth="1.1" />
          <path d="M1573 540V549" markerEnd="url(#pk)" />
          <path d="M1399 541C1383 560 1385 580 1405 600C1420 615 1435 630 1442 637" markerEnd="url(#pk)" />
          <path d="M1307 479H1333" />
          <path d="M1308 473L1318 462L1328 473ZM1313 470H1323" strokeWidth="1.2" />
          <path d="M1614 552L1677 575L1685 553L1707 573L1738 540L1735 570L1773 566L1757 582L1795 585L1765 603L1802 616L1763 610L1771 643L1734 623L1728 653L1704 625L1687 664L1680 628L1655 641L1662 619L1613 623L1646 607L1613 588L1654 583Z" />
          {e.slice(0, 11).map((v, i) => (i % 2 === 0
            ? <rect key={i} x={v} y={735} width={e[i + 1] - v} height={7.3} strokeWidth="1.2" />
            : <React.Fragment key={i}><rect x={v} y={742.3} width={e[i + 1] - v} height={7.5} strokeWidth="1.2" /><rect x={v} y={749.8} width={e[i + 1] - v} height={7.5} strokeWidth="1.2" /></React.Fragment>))}
        </g>
        <g fill="none" stroke="#f08a40" strokeDasharray="1.5 1.5">
          <path d="M1188 542C1195 552 1215 552 1244 541" />
          <path d="M1437 480Q1460 455 1500 434" markerEnd="url(#po)" />
          <path d="M1441 482C1430 495 1432 505 1440 518" markerEnd="url(#po)" />
        </g>
        <g fill="none" stroke="#f00">
          <rect x="1187.5" y="539.5" width="40" height="17" strokeWidth="3.5" />
          <rect x="1408.5" y="427.5" width="102" height="107" strokeWidth="3.5" />
          <rect x="1607.5" y="537.5" width="201" height="134" strokeWidth="3.5" />
        </g>
        <Bird x={1052} y={736} s={0.75} />
      </Overlay>
      <Lbl {...lp(1441, 537)} $r={-35.4} $s={61} $c="rgba(120,120,120,0.28)">CÓPIA NÃO CONTROLADA</Lbl>
    </Canvas>
  );
};

export default function App() {
  return (
    <>
      <Global />
      <Screen>
        <Excel>
          <TitleBar>
            <XlLogo>X</XlLogo>
            <TB $ml={15}>Salvamento Automático</TB>
            <Toggle />
            <TB $ml={12}><Save size={16} strokeWidth={1.2} /></TB>
            <TB $ml={13}><Undo2 size={16} strokeWidth={1.2} /></TB>
            <TB $ml={3}><Chev /></TB>
            <TB $ml={11}><Redo2 size={16} strokeWidth={1.2} /></TB>
            <TB $ml={3}><Chev /></TB>
            <TB $ml={14}><Chev /></TB>
            <TB $ml={24}>VS...</TB>
            <TB $ml={13}>· Salvo...</TB>
            <TB $ml={8}><ChevronDown size={11} /></TB>
            <TB $ml={35}><FlipIcon><Search size={17} strokeWidth={1.2} /></FlipIcon></TB>
            <TB $ml={38}>Marcos Roberto Meneghette</TB>
            <Avatar>MR</Avatar>
            <TB $ml={26}><PenLine size={17} strokeWidth={1.2} /></TB>
            <TB $ml={31.5}><Minus size={14} strokeWidth={1.2} /></TB>
            <TB $ml={35}><Square size={12} strokeWidth={1.2} /></TB>
            <TB $ml={34.5}><X size={15} strokeWidth={1.2} /></TB>
          </TitleBar>
          <TabsRow>
            <RTab $ml={0}>Arquivo</RTab>
            <RTab $ml={15} $active>Página Inicial</RTab>
            <RTab $ml={20}>Inserir</RTab>
            <RTab $ml={21}>Desenhar</RTab>
            <RTab $ml={22}>Layout da Página</RTab>
            <RTab $ml={23}>Fórmulas</RTab>
            <RTab $ml={21}>Dados</RTab>
            <RTab $ml={19}>Revisão</RTab>
            <RTab $ml={20}>Exibir</RTab>
            <RTab $ml={22}>Automate</RTab>
            <RTab $ml={23}>Ajuda</RTab>
            <TabBtns>
              <CommentBtn><MessageSquare size={12} color="#ddd" /></CommentBtn>
              <ShareBtn><PenLine size={13} /><Chev s={8} /></ShareBtn>
            </TabBtns>
          </TabsRow>
          <Ribbon>
            <Group $w={116.5}>
              <Body $pl={12.5}>
                <PasteCol><PasteIcon /><BigLabel>Colar</BigLabel><Chev /></PasteCol>
                <ToolsCol><Scissors size={15} strokeWidth={1.3} color="#9fc4e8" /><Copy size={14} strokeWidth={1.2} /><Paintbrush size={15} strokeWidth={1.3} color="#e0b050" /></ToolsCol>
              </Body>
              <LabelRow><GLabel>Área de Transfe...</GLabel><Launcher /></LabelRow>
            </Group>
            <Group $w={162.5}>
              <Body $pl={9.5}>
                <Stack>
                  <Row><Select $w={95}>Calibri<Chev /></Select><Select $w={47} $ml={3}>10<Chev /></Select></Row>
                  <Row>
                    <Cell $w={24}><b>N</b></Cell><Cell $w={26}><i>I</i></Cell><Cell $w={26}><u>S</u></Cell><Cell $w={12}><Chev /></Cell><Sep />
                    <Cell $w={27} $ml={2} $fs={15}>A<Sup>^</Sup></Cell><Cell $w={27} $fs={14}>A<Sup>ˇ</Sup></Cell>
                  </Row>
                  <Row>
                    <Cell $w={24}><Grid3x3 size={14} strokeWidth={1} /></Cell><Cell $w={12}><Chev /></Cell><Sep />
                    <Cell $w={26} $ml={3}><PaintBucket size={13} strokeWidth={1.2} /><UnderBar $c="#fff" /></Cell><Cell $w={10}><Chev /></Cell>
                    <Cell $w={26} $ml={3}>A<UnderBar $c="#e81123" /></Cell><Cell $w={12}><Chev /></Cell>
                  </Row>
                </Stack>
              </Body>
              <LabelRow><GLabel>Fonte</GLabel><Launcher /></LabelRow>
            </Group>
            <Group $w={134.5}>
              <Body $pl={9}>
                <Stack>
                  <Row><Cell $w={26}><Lines rows={aV(3)} /></Cell><Cell $w={24} $sel><Lines rows={aV(4.5)} /></Cell><Cell $w={26} $ml={1}><Lines rows={aV(6)} /></Cell><Cell $w={26}><WrapText size={15} strokeWidth={1.2} color="#7ab8ea" /></Cell></Row>
                  <Row><Cell $w={26}><Lines rows={aH('l')} /></Cell><Cell $w={26}><Lines rows={aH('c')} /></Cell><Cell $w={24} $sel><Lines rows={aH('r')} /></Cell><Cell $w={26} $ml={1}><svg width="16" height="16"><rect x="1.5" y="2.5" width="13" height="11" fill="none" stroke="#4aa3e0" /><path d="M1 8h14" stroke="#cfcfcf" /></svg></Cell><Cell $w={10}><Chev /></Cell></Row>
                  <Row><Cell $w={26}><Lines rows={aH('r')} c="#6ab0e8" /></Cell><Cell $w={26}><Lines rows={aH('r')} c="#6ab0e8" /></Cell><Sep /><Cell $w={24} $ml={2}><svg width="16" height="16"><path d="M3 14L13 3" stroke="#5ba9e6" strokeWidth="1.4" /><path d="M3 3l5 5" stroke="#ccc" /></svg></Cell><Cell $w={10}><Chev /></Cell></Row>
                </Stack>
              </Body>
              <LabelRow><GLabel>Alinhamento</GLabel><Launcher /></LabelRow>
            </Group>
            <Group $w={107.5}>
              <Body $pl={9.5}>
                <Stack>
                  <Row><Select $w={90}>Geral<Chev /></Select></Row>
                  <Row><Cell $w={24}><svg width="16" height="15"><rect x="1.5" y="2.5" width="13" height="10" fill="none" stroke="#ccc" /><ellipse cx="11" cy="10" rx="3.5" ry="3" fill="#e0b050" /></svg></Cell><Cell $w={10}><Chev /></Cell><Cell $w={26} $ml={3} $fs={16}>%</Cell><Cell $w={24} $fs={9}>000</Cell></Row>
                  <Row><Cell $w={24}><Tiny $c="#9cc8ee">←,0<br />,00</Tiny></Cell><Cell $w={28} $ml={3}><Tiny $c="#9cc8ee">,00<br />→,0</Tiny></Cell></Row>
                </Stack>
              </Body>
              <LabelRow><GLabel>Número</GLabel><Launcher /></LabelRow>
            </Group>
            <Group $w={189.5}>
              <Body>
                <StyleStack>
                  <StyleRow><StyleIcon k={0} />Formatação Condicional<Chev /></StyleRow>
                  <StyleRow><StyleIcon k={1} />Formatar como Tabela<Chev /></StyleRow>
                  <StyleRow><StyleIcon k={2} />Estilos de Célula<Chev /></StyleRow>
                </StyleStack>
              </Body>
              <LabelRow><GLabel>Estilos</GLabel></LabelRow>
            </Group>
            <Group $w={55.5}>
              <Body><BigCol><CellsIcon /><BigLabel>Células</BigLabel><Chev /></BigCol></Body>
              <LabelRow />
            </Group>
            <Group $w={56}>
              <Body><BigCol><BigSearch /><BigLabel>Edição</BigLabel><Chev /></BigCol></Body>
              <LabelRow />
            </Group>
            <Group $w={89}>
              <Body><BigCol $pt={9}><Addins /><BigLabel>Suplementos</BigLabel></BigCol></Body>
              <LabelRow><GLabel>Suplementos</GLabel></LabelRow>
            </Group>
            <Group $w={31} $noSep>
              <Body />
              <LabelRow><GLabel><ChevronDown size={12} /></GLabel></LabelRow>
            </Group>
          </Ribbon>
          <FormulaRow>
            <FBox $w={102}>AH18<Chev s={11} /></FBox>
            <Dots><EllipsisVertical size={12} /></Dots>
            <FBox $w={73} $ml={5}><X size={13} color="#666" strokeWidth={1.2} /><Check size={13} color="#666" strokeWidth={1.2} /><Fx>fx</Fx></FBox>
            <FBox $grow $ml={5}><span /><Chev s={11} /></FBox>
          </FormulaRow>
          <SheetWrap>
            <SheetLeft>
              <ColHead>{COLS.map(([c, w], i) => <ColH key={i} $w={w}>{c}</ColH>)}</ColHead>
              <SheetMid>
                <RowHeads>{ROWS.map(([n, h]) => <RowH key={n} $h={h}>{n}</RowH>)}</RowHeads>
                <SheetMain>
                  <ExcelDiagram />
                  <BlueLine />
                  <Below>
                    <ActTable>
                      <AHead>ATIVIDADE</AHead>
                      <AHead $mark>FILA</AHead>
                      <AHead $mark>TRAJETO</AHead>
                      <AHead $mark><BlueIcon><svg width="10" height="11" viewBox="0 0 10 11"><path d="M5 1C7 3.5 9 5 9 7A4 4 0 011 7C1 5 3 3.5 5 1z" fill="#fff" /><circle cx="5" cy="7" r="1.7" fill="#3f5a8f" /></svg></BlueIcon></AHead>
                      <AHead $mark><BlueIcon><svg width="10" height="12"><rect x="1.5" y="1.5" width="7" height="9" fill="#3f5a8f" stroke="#fff" strokeWidth="2" /></svg></BlueIcon></AHead>
                      {['TP', 'TE', 'C&Ax', 'TR', 'SYS'].map(t => <AHead key={t} $mark>{t}</AHead>)}
                      {Array.from({ length: 9 }).map((_, r) => (
                        <React.Fragment key={r}>
                          <ACell>{r < 2 ? 'Atividade  - verbo no infinitivo' : ''}</ACell>
                          {Array.from({ length: 9 }).map((__, c) => <ACell key={c} />)}
                        </React.Fragment>
                      ))}
                    </ActTable>
                    <Note>1DIA - 8,8 HORAS</Note>
                    <DataTable>
                      {['Atividades', 'Fila', 'Trajeto', '', '', 'TP', 'TE', 'TR', 'SYS'].map((h, i) => <DH key={i}>{h}</DH>)}
                      {BAD.map((r, ri) => r.map((v: any, ci: number) => (
                        <DC key={`${ri}-${ci}`} $alt={ri % 2 === 1} $left={ci === 0}>
                          {ci === 0 ? <>{v[0]}<Sm>{v[1]}</Sm></> : v === '*' ? <RedStar>*</RedStar> : v}
                        </DC>
                      )))}
                    </DataTable>
                  </Below>
                </SheetMain>
              </SheetMid>
            </SheetLeft>
            <VScroll><Tri $up /><Thumb /><Tri /></VScroll>
          </SheetWrap>
          <SheetTabs>
            <TabIcon $ml={0}><ChevronLeft size={15} strokeWidth={1.2} /></TabIcon>
            <TabIcon $ml={18}><ChevronRight size={15} strokeWidth={1.2} /></TabIcon>
            <ActiveTab>Nome do Processo</ActiveTab>
            <TabSep $ml={3} />
            <SheetTab>Simbologia Adm-Informativo</SheetTab>
            <TabSep $ml={20} />
            <TabIcon $ml={27}><Ellipsis size={14} /></TabIcon>
            <TabIcon $ml={19}><Plus size={14} strokeWidth={1.2} /></TabIcon>
            <TabIcon $ml={18}><EllipsisVertical size={14} /></TabIcon>
            <HTrack><HTriL /><HThumb /><HTriR /></HTrack>
          </SheetTabs>
          <Status>
            Pronto
            <SItem $ml={20}><Accessibility size={15} strokeWidth={1.2} /></SItem>
            <SItem $ml={3.5}>Acessibilidade: investigar</SItem>
            <SItem $ml={301.5}><MonitorCog size={15} strokeWidth={1.2} /></SItem>
            <SItem $ml={3.5}>Exibir Configurações</SItem>
            <SItem $ml={32}><Grid3x3 size={14} strokeWidth={1} /></SItem>
            <SItem $ml={26}><FileText size={14} strokeWidth={1} /></SItem>
            <SItem $ml={14} $on><Square size={14} strokeWidth={1} /></SItem>
            <SItem $ml={6.5}><Minus size={9} /></SItem>
            <ZoomTrack />
            <SItem $ml={2.5}><Plus size={9} /></SItem>
            <SItem $ml={13}>55%</SItem>
          </Status>
        </Excel>
        <Acro>
          <ATop>
            <AI $ml={14}><Menu size={16} strokeWidth={1.4} /></AI>
            <AI $ml={9}>Menu</AI>
            <ASep />
            <AI $ml={7}><House size={16} strokeWidth={1.3} /></AI>
            <DocTab><Star size={16} strokeWidth={1.3} /><ATxt $ml={8}>VSM-MET-005.pdf (SEC...</ATxt><ATxt $ml={13}><X size={13} strokeWidth={2.5} /></ATxt></DocTab>
            <CreateBtn><Plus size={12} />Create</CreateBtn>
            <AI $ml={256}><CircleHelp size={17} strokeWidth={1.3} /></AI>
            <AI $ml={15.5}><Bell size={17} strokeWidth={1.3} color="#555" /></AI>
            <AI $ml={22.5}><SignIn>Sign in</SignIn></AI>
            <AI $ml={46}><Minus size={14} strokeWidth={2.5} /></AI>
            <AI $ml={36.5}><Square size={11} strokeWidth={1.3} /></AI>
          </ATop>
          <ATool>
            <ATxt>All tools</ATxt>
            <ATxt $ml={24}>Edit</ATxt>
            <ATxt $ml={24}>Convert</ATxt>
            <ATxt $ml={24}>Sign</ATxt>
            <ATxt $ml={345}>Find text or tools</ATxt>
            <ATxt $ml={10}><Search size={16} strokeWidth={1.4} /></ATxt>
            <AVSep $ml={18.6} />
            <ATxt $ml={16}><Save size={17} strokeWidth={1.4} /></ATxt>
            <ATxt $ml={22.5}><CloudUpload size={18} strokeWidth={1.4} /></ATxt>
            <ATxt $ml={22.5}><Printer size={17} strokeWidth={1.4} /></ATxt>
            <AVSep $ml={16.5} />
            <ATxt $ml={14.5}><UserPlus size={17} strokeWidth={1.4} /></ATxt>
            <ATxt $ml={23}><RotIcon><Link2 size={17} strokeWidth={1.4} /></RotIcon></ATxt>
          </ATool>
          <AMain>
            <Rail>
              <RailBox>
                <RailHandle />
                <RailBtn $on $mt={8}><svg width="12" height="16" viewBox="0 0 12 16"><path d="M1 0v13l3-3 2.5 5 2-1-2.5-5H10z" fill="#fff" /></svg></RailBtn>
                <RailBtn $mt={10}><TextTool>A</TextTool></RailBtn>
                <RailBtn $mt={9}><PenLine size={16} color="#ddd" strokeWidth={1.4} /></RailBtn>
              </RailBox>
            </Rail>
            <DocArea><PdfDiagram /></DocArea>
            <ScrollCol><ScrollLine /></ScrollCol>
          </AMain>
        </Acro>
      </Screen>
    </>
  );
}
